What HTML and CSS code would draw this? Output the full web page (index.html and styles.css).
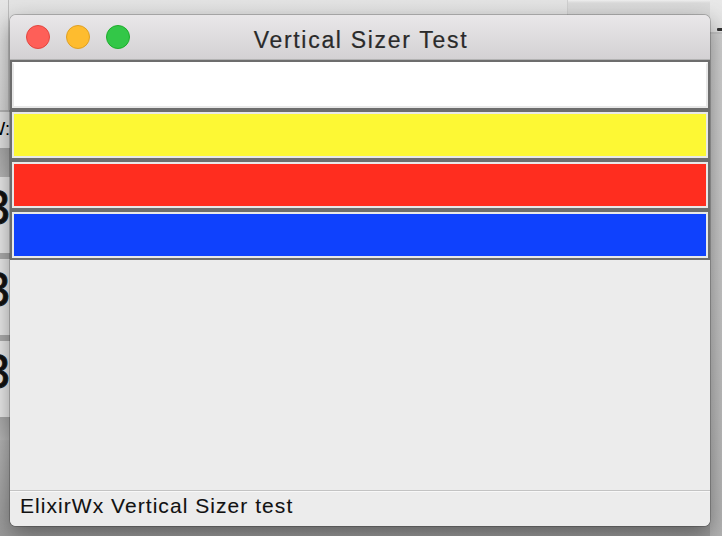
FILE: index.html
```html
<!DOCTYPE html>
<html>
<head>
<meta charset="utf-8">
<title>Vertical Sizer Test</title>
<link rel="stylesheet" href="styles.css">
</head>
<body>
<div class="desktop">
  <div class="back-left">
    <div class="bl-title"></div>
    <div class="bl-line"></div>
    <div class="bl-wrow">W:</div>
    <div class="bl-band"></div>
    <div class="bl-cell">3</div>
    <div class="bl-sep"></div>
    <div class="bl-cell">3</div>
    <div class="bl-sep"></div>
    <div class="bl-cell">3</div>
    <div class="bl-band bl-band-low"></div>
  </div>
  <div class="back-top"></div>
  <div class="back-right">
    <div class="br-top"><span class="br-dash"></span></div>
    <div class="br-body"></div>
  </div>

  <div class="window">
    <div class="titlebar">
      <div class="lights">
        <span class="light red"></span>
        <span class="light yellow"></span>
        <span class="light green"></span>
      </div>
      <div class="title">Vertical Sizer Test</div>
    </div>
    <div class="rows">
      <div class="row"><div class="box white"></div></div>
      <div class="row"><div class="box yellow-box"></div></div>
      <div class="row"><div class="box red-box"></div></div>
      <div class="row"><div class="box blue-box"></div></div>
    </div>
    <div class="panel"></div>
    <div class="status">ElixirWx Vertical Sizer test</div>
  </div>
</div>
</body>
</html>
```
FILE: styles.css
```css
html, body {
  margin: 0;
  padding: 0;
}

body {
  width: 722px;
  height: 536px;
  overflow: hidden;
  font-family: "Liberation Sans", Arial, sans-serif;
}

.desktop {
  position: relative;
  width: 722px;
  height: 536px;
  overflow: hidden;
  background: linear-gradient(#e3e3e3 0%, #d4d4d4 40%, #bcbcbc 75%, #9a9a9a 100%);
}

/* background window on the left */
.back-left {
  position: absolute;
  left: -191px;
  top: 0;
  width: 201px;
  height: 443px;
  display: flex;
  flex-direction: column;
}

.bl-title {
  height: 110px;
  margin-right: 1px;
  background: linear-gradient(#e5e5e5, #d5d5d5);
  border-right: 1px solid #bcbcbc;
}

.bl-line {
  height: 2px;
  background: #b4b4b4;
}

.bl-wrow {
  height: 36px;
  background: #e1e1e1;
  text-align: right;
  font-size: 18px;
  line-height: 34px;
  color: #000;
}

.bl-band {
  height: 29px;
  background: linear-gradient(#a8a8a8, #b6b6b6);
}

.bl-band-low {
  height: 23px;
}

.bl-cell {
  height: 76px;
  background: #e8e8e8;
  text-align: right;
  font-size: 48px;
  line-height: 62px;
  color: #111;
  -webkit-text-stroke: 1px #1a1a1a;
}

.bl-sep {
  height: 6px;
  background: #ababab;
}

.back-top {
  position: absolute;
  left: 567px;
  top: 0;
  width: 155px;
  height: 32px;
  background: linear-gradient(#efefef 0px, #dadada 3px, #d6d6d6 100%);
  border-left: 1px solid #cfcfcf;
}

.back-right {
  position: absolute;
  left: 710px;
  top: 0;
  width: 12px;
  height: 536px;
  display: flex;
  flex-direction: column;
}

.br-top {
  height: 32px;
  position: relative;
  background: linear-gradient(#e8e8e8, #e2e2e2);
  border-bottom: 2px solid #c4c4c4;
}

.br-dash {
  position: absolute;
  left: 7px;
  top: 28px;
  width: 6px;
  height: 3px;
  background: #333;
  border-radius: 1px;
}

.br-body {
  flex: 1;
  background: linear-gradient(#d0d0d0, #c4c4c4 50%, #b2b2b2);
}

/* main window */
.window {
  position: absolute;
  left: 10px;
  top: 15px;
  width: 700px;
  height: 511px;
  border-radius: 6px;
  overflow: hidden;
  display: flex;
  flex-direction: column;
  background: #ececec;
  box-shadow: 0 0 0 1px rgba(0, 0, 0, 0.2), 0 8px 22px rgba(0, 0, 0, 0.4);
}

.titlebar {
  flex: none;
  height: 45px;
  box-sizing: border-box;
  background: linear-gradient(#e9e7e9, #d3d1d3);
  border-bottom: 1px solid #b2b2b2;
  display: grid;
  grid-template-areas: "cell";
}

.lights {
  grid-area: cell;
  display: flex;
  align-items: center;
  gap: 16px;
  padding-left: 16px;
}

.light {
  width: 24px;
  height: 24px;
  border-radius: 50%;
  box-sizing: border-box;
}

.light.red {
  background: #fe5f58;
  border: 1px solid #e2463f;
}

.light.yellow {
  background: #febc2f;
  border: 1px solid #dfa024;
}

.light.green {
  background: #33c748;
  border: 1px solid #1dad2b;
}

.title {
  grid-area: cell;
  justify-self: center;
  align-self: start;
  margin-top: 12px;
  margin-left: 2px;
  font-size: 23px;
  line-height: 26px;
  letter-spacing: 1.7px;
  color: #2a2a2a;
  -webkit-text-stroke: 0.2px #2a2a2a;
}

.rows {
  flex: none;
  background: #6d6d6d;
  padding: 0 2px;
}

.row {
  height: 50px;
  box-sizing: border-box;
  padding: 2px 0;
}

.box {
  height: 46px;
  box-sizing: border-box;
  border: 2px solid #e8e8e8;
}

.box.white {
  background: #ffffff;
  border-top-color: #ffffff;
}

.yellow-box {
  background: #fdf834;
}

.red-box {
  background: #ff2d1f;
}

.blue-box {
  background: #0f41fd;
}

.panel {
  flex: 1;
  background: #ececec;
}

.status {
  flex: none;
  height: 36px;
  box-sizing: border-box;
  border-top: 1px solid #c3c3c3;
  box-shadow: inset 0 1px 0 #f8f8f8;
  padding: 3px 0 0 10px;
  font-size: 21px;
  line-height: 24px;
  letter-spacing: 1.05px;
  color: #111;
  -webkit-text-stroke: 0.1px #111;
  background: #ececec;
}
```
